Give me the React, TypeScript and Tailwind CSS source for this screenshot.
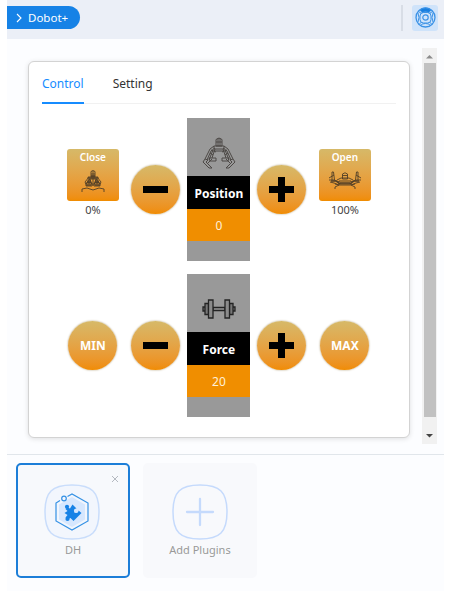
import type { ReactNode } from "react";

const circle =
  "flex h-[49px] w-[49px] items-center justify-center rounded-full bg-gradient-to-b from-[#d6b968] to-[#f08c00] shadow-[0_0_2px_#a89468]";

function GripperClosed() {
  return (
    <svg width="24" height="24" viewBox="0 0 24 24" fill="none" stroke="#513f27" strokeWidth="0.9">
      <path d="M10 8V2.500Q12 .5 14 2.500V8zM10 5h4M12 2v6M7 8h10v2H7z" />
      <path d="M8 8 4 13l2 4M16 8l4 5-2 4M9 10l-4 5M15 10l4 5M9 10l2 6M15 10l-2 6M5 14h6v3H5zM13 14h6v3h-6zM12 9v8M7 11h2v3H7zM15 11h2v3h-2z" />
      <path d="M1 23v-3l5-1 6 2 6-2 5 1v3" />
      <path d="M6 13h4M14 13h4M6 16h4M14 16h4M10 7h4M8 9h8" strokeWidth="1.500" />
    </svg>
  );
}

function GripperHalf() {
  return (
    <svg width="34" height="34" viewBox="0 0 34 34" fill="none" stroke="#4d4946" strokeWidth="1">
      <path d="M14 10V3.500Q17 .5 20 3.500V10zM16 2v8M18 2v8M14 6h6M12 10h10v3H12z" />
      <path d="M12 10 8 13 3 23M13 12l-4 3-4 9M11 14 7 24M22 10l4 3 5 10M21 12l4 3 4 9M23 14l4 10M13 13l-3 9M21 13l3 9M9 14l5 2M25 14l-5 2M13 15h8M8 17l3 2M26 17l-3 2" />
      <path d="M7 22h7v3H8zM27 22h-7v3h6zM3 23l-2 3 6 6h3l-6-6 2-2zM31 23l2 3-6 6h-3l6-6-2-2zM10 23l-4 4M24 23l4 4" />
    </svg>
  );
}

function GripperOpen() {
  return (
    <svg width="34" height="20" viewBox="0 0 34 20" fill="none" stroke="#513f27" strokeWidth="0.9">
      <path d="M14.500 8V3Q17 .5 19.500 3V8zM14.500 4.500h5M11 10h12v3H11zM11 11 6 9 1 9M11 14 6 12 2 11M23 11l5-2h5M23 14l5-2 4-1" />
      <path d="M4 9V1h1.500l1 8M1 7l5-3M30 9V1h-1.500l-1 8M33 7l-5-3M9 9l4-2h8l4 2M7 13l4 1M27 13l-4 1M7 18v-2l4-2h12l4 2v2" />
      <path d="M3 10h5l4 3M31 10h-5l-4 3M12 12h10" strokeWidth="1.400" />
    </svg>
  );
}

function Dumbbell() {
  return (
    <svg width="34" height="22" viewBox="0 0 34 22" fill="#777" stroke="#242424" strokeWidth="1.300">
      <path d="M11 9.500h12v3H11z" fill="#999" />
      <path d="M1 9h2v4H1zM31 9h2v4h-2zM3 5.500h3.500v11H3zM27.500 5.500H31v11h-3.500z" />
      <path d="M6.500 2h4.500v18H6.500zM23 2h4.500v18H23z" fill="#8b8b8b" />
    </svg>
  );
}

function Sign({ plus = false }: { plus?: boolean }) {
  return (
    <div className="flex w-[63px] justify-center">
      <div className={circle}>
        <svg width="25" height="25" viewBox="0 0 25 25" fill="#000">
          <path d="M0 9h25v7H0z" />
          {plus && <path d="M9 0h7v25H9z" />}
        </svg>
      </div>
    </div>
  );
}

function Preset({ label, value, children }: { label: string; value: string; children: ReactNode }) {
  return (
    <div className="mt-[31px] flex w-[63px] flex-col items-center">
      <div className="flex h-[52px] w-[52px] flex-col items-center rounded-[3px] bg-gradient-to-b from-[#d6b968] to-[#f08c00]">
        <span className="text-[10px] leading-[16px] font-semibold text-white">{label}</span>
        <div className="flex h-[32px] items-center">{children}</div>
      </div>
      <span className="mt-[1px] text-[11px] leading-[16px] text-[#444]">{value}</span>
    </div>
  );
}

function Gauge({ label, value, children }: { label: string; value: string; children: ReactNode }) {
  return (
    <div className="h-[143px] w-[63px] bg-[#999] text-center text-white">
      <div className="flex h-[58px] items-center justify-center pt-[12px]">{children}</div>
      <div className="h-[33px] bg-black text-[12px] leading-[35px] font-bold">{label}</div>
      <div className="h-[32px] bg-[#f08e00] text-[12px] leading-[34px] text-[#fff0d8]">{value}</div>
    </div>
  );
}

function Limit({ label }: { label: string }) {
  return (
    <div className="flex w-[63px] justify-center">
      <div className={`${circle} text-[12px] font-bold text-white`}>{label}</div>
    </div>
  );
}

const outline = "M28 1C48 1 55 8 55 28S48 55 28 55 1 48 1 28 8 1 28 1Z";

export default function App() {
  return (
    <div className="h-[591px] w-[458px] overflow-hidden bg-white pl-[7px] font-['Noto_Sans',sans-serif]">
      <div className="flex h-full w-[437px] flex-col bg-[#fcfdff]">
        <header className="flex h-[39px] shrink-0 items-start justify-between bg-[#ebeff7] pr-[6px]">
          <button className="mt-[6px] flex h-[23px] w-[73px] items-center rounded-r-full bg-[#1682e6] pl-[9px] text-[11.5px] text-white">
            <svg width="6" height="10" viewBox="0 0 6 10" fill="none" stroke="#fff" strokeWidth="1.1">
              <path d="m1 1 4 4-4 4" />
            </svg>
            <span className="ml-[6px]">Dobot+</span>
          </button>
          <div className="mt-[4px] flex h-[27px] items-center gap-[9px]">
            <div className="h-[26px] w-[2px] bg-[#d8dde6]" />
            <div className="flex h-[26px] w-[26px] items-center justify-center rounded-[3px] bg-[#cfe3fa]">
              <svg width="21" height="21" viewBox="0 0 21 21" fill="none" stroke="#3b92e6">
                <circle cx="10.500" cy="10.500" r="9.500" strokeWidth="1.300" />
                <path d="M5 2.800Q10.500-1 16 2.800L14 5.500Q10.500 4 7 5.500Z" fill="#187fe0" />
                <rect x="5" y="5.500" width="11" height="10.500" rx="3.500" />
                <circle cx="10.500" cy="10.500" r="2.700" strokeWidth="1.200" />
                <path d="m3.500 4.500 3 2M17.500 4.500l-3 2M4.500 17l2-2M16.500 17l-2-2M3 6q2 4.500 0 9M18 6q-2 4.500 0 9M6 18.500q0-2 4.500-2t4.500 2" />
              </svg>
            </div>
          </div>
        </header>

        <main className="flex h-[415px] shrink-0 items-start justify-between pt-[9px] pr-[7px] pl-[21px]">
          <section className="mt-[13px] h-[377px] w-[382px] rounded-[6px] border border-[#d3d3d3] bg-white px-[13px] shadow-[0_1px_5px_#0000001f]">
            <nav className="flex h-[42px] gap-[29px] border-b border-[#f1f1f1] text-[12px]">
              <span className="h-[42px] border-b-2 border-[#168cff] pt-[13px] leading-[18px] text-[#168cff]">Control</span>
              <span className="pt-[13px] leading-[18px] text-[#333]">Setting</span>
            </nav>
            <div className="mt-[14px] ml-[19.4px] flex flex-col gap-[13px]">
              <div className="flex">
                <Preset label="Close" value="0%"><GripperClosed /></Preset>
                <div className="flex items-center"><Sign /></div>
                <Gauge label="Position" value="0"><GripperHalf /></Gauge>
                <div className="flex items-center"><Sign plus /></div>
                <Preset label="Open" value="100%"><GripperOpen /></Preset>
              </div>
              <div className="flex items-center">
                <Limit label="MIN" />
                <Sign />
                <Gauge label="Force" value="20"><Dumbbell /></Gauge>
                <Sign plus />
                <Limit label="MAX" />
              </div>
            </div>
          </section>
          <div className="flex h-[396px] w-[15px] flex-col items-center justify-between bg-[#f1f1f1]">
            <svg width="15" height="15" viewBox="0 0 15 15" fill="#8b8b8b"><path d="m7.500 7 3.500 3.500H4z" /></svg>
            <div className="h-[354px] w-[12px] bg-[#c1c1c1]" />
            <div className="flex h-[27px] items-end pb-[2px]">
              <svg width="15" height="15" viewBox="0 0 15 15" fill="#444"><path d="M4 7h7l-3.500 3.500z" /></svg>
            </div>
          </div>
        </main>

        <footer className="flex flex-1 gap-[13px] border-t border-[#e1e6eb] pt-[8px] pl-[9px] text-[11px] text-[#999]">
          <div className="relative flex h-[115px] w-[114px] flex-col items-center rounded-[5px] border-2 border-[#1c7ed8] bg-[#f7f9fc] pt-[19px]">
            <svg className="absolute top-[10px] right-[9px]" width="8" height="8" viewBox="0 0 8 8" stroke="#b4b9c0"><path d="m1 1 6 6M7 1 1 7" /></svg>
            <svg className="mr-[2px] shrink-0" width="56" height="56" viewBox="0 0 56 56" fill="none">
              <path d={outline} fill="#f2f6fd" stroke="#c9ddfb" strokeWidth="1.500" />
              <path d="m28 13 13 7.500v15L28 43l-13-7.500v-15z" fill="#d6e7fe" />
              <path d="m23.500 12.500 4.500-2.500 16 9v18l-16 9-16-9V19l4-2.500" stroke="#3491e5" strokeWidth="1.200" />
              <circle cx="20" cy="14.500" r="2.300" stroke="#3491e5" strokeWidth="1.200" fill="#f2f6fd" />
              <path d="m28.500 20.500 4 4a2.300 2.300 0 1 0 2 2l3 2.500-8 8-3-3-3 1.500-2-2 2-2.500-3-2 3-2-2-2 2-1.500 2.500 1z" fill="#1682e6" />
              <circle cx="23" cy="22.800" r="2.100" fill="#1682e6" />
              <circle cx="23.500" cy="35" r="2.100" fill="#1682e6" />
            </svg>
            <span className="mt-[2px] leading-[16px]">DH</span>
          </div>
          <div className="flex h-[115px] w-[114px] flex-col items-center rounded-[5px] bg-[#f8f9fc] pt-[21px]">
            <svg className="shrink-0" width="56" height="56" viewBox="0 0 56 56" fill="none" stroke="#c5dafc" strokeLinecap="round">
              <path d={outline} strokeWidth="1.500" />
              <path d="M28 15v26M15 28h26" strokeWidth="2.300" />
            </svg>
            <span className="mt-[2px] leading-[16px]">Add Plugins</span>
          </div>
        </footer>
      </div>
    </div>
  );
}
